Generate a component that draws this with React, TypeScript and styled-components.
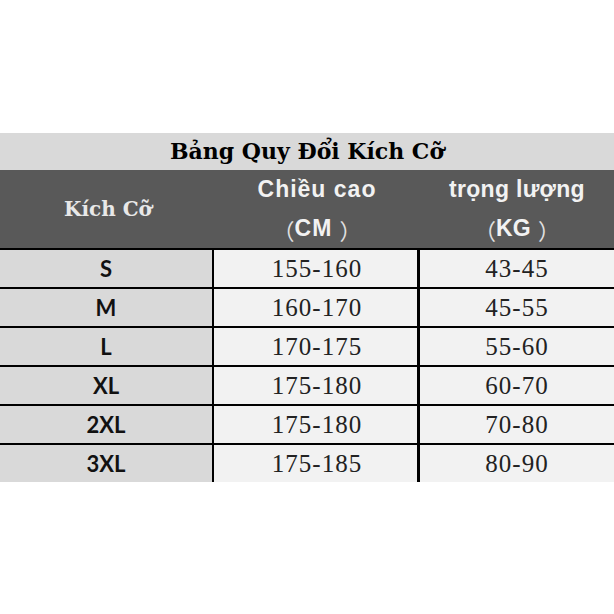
import React from "react";
import styled, { createGlobalStyle } from "styled-components";

const GlobalStyle = createGlobalStyle`
  html, body {
    margin: 0;
    padding: 0;
    background: #ffffff;
  }
`;

type SizeRow = { size: string; height: string; weight: string };

const rows: SizeRow[] = [
  { size: "S", height: "155-160", weight: "43-45" },
  { size: "M", height: "160-170", weight: "45-55" },
  { size: "L", height: "170-175", weight: "55-60" },
  { size: "XL", height: "175-180", weight: "60-70" },
  { size: "2XL", height: "175-180", weight: "70-80" },
  { size: "3XL", height: "175-185", weight: "80-90" },
];

const Page = styled.div`
  width: 614px;
  height: 614px;
  padding-top: 133px;
  box-sizing: border-box;
`;

const Title = styled.div`
  height: 37px;
  background: #d9d9d9;
  display: flex;
  align-items: center;
  justify-content: center;
  font-family: "DejaVu Serif", "Liberation Serif", serif;
  font-weight: bold;
  font-size: 22px;
  color: #000;
  padding-bottom: 2px;
  box-sizing: border-box;
`;

const Grid = styled.div`
  display: grid;
  grid-template-columns: 214px 206px 1fr;
`;

const Header = styled(Grid)`
  height: 78px;
  background: #595959;
`;

const SizeHead = styled.div`
  display: flex;
  align-items: center;
  justify-content: center;
  font-family: "DejaVu Serif", "Liberation Serif", serif;
  font-weight: bold;
  font-size: 20px;
  color: #e8e8e8;
  padding-left: 2px;
`;

const HeadCol = styled.div<{ $spacing: number }>`
  display: grid;
  grid-template-rows: 39px 39px;
  font-family: "Liberation Sans", Arial, "Noto Sans CJK SC", sans-serif;
  font-weight: bold;
  font-size: 23px;
  letter-spacing: ${(p) => p.$spacing}px;
  color: #f2f2f2;
`;

const HeadLine = styled.div`
  display: flex;
  align-items: center;
  justify-content: center;
`;

const Paren = styled.span<{ $close?: boolean }>`
  font-family: "Noto Sans CJK SC", sans-serif;
  font-weight: normal;
  font-size: 22px;
  letter-spacing: 0;
  color: #e0e0e0;
  margin-left: ${(p) => (p.$close ? "7px" : "0")};
`;

const Row = styled(Grid)`
  height: 39px;
  border-top: 2px solid #000;
  box-sizing: border-box;
`;

const Cell = styled.div<{ $shade?: boolean; $edge?: number }>`
  display: flex;
  align-items: center;
  justify-content: center;
  background: ${(p) => (p.$shade ? "#d9d9d9" : "#f2f2f2")};
  border-right: ${(p) => (p.$edge ? `${p.$edge}px solid #000` : "none")};
  padding-left: ${(p) => (p.$edge === 3 ? "3px" : "0")};
  box-sizing: border-box;
`;

const SizeText = styled.span`
  font-family: Lato, "Open Sans", sans-serif;
  font-weight: bold;
  font-size: 22px;
  color: #111;
`;

const ValueText = styled.span`
  font-family: "Liberation Serif", "Times New Roman", serif;
  font-size: 25px;
  letter-spacing: 1px;
  color: #222;
`;

export default function App() {
  return (
    <>
      <GlobalStyle />
      <Page>
        <Title>Bảng Quy Đổi Kích Cỡ</Title>
        <Header>
          <SizeHead>Kích Cỡ</SizeHead>
          <HeadCol $spacing={1}>
            <HeadLine>Chiều cao</HeadLine>
            <HeadLine>
              <Paren>（</Paren>CM<Paren $close>）</Paren>
            </HeadLine>
          </HeadCol>
          <HeadCol $spacing={0.3}>
            <HeadLine>trọng lượng</HeadLine>
            <HeadLine>
              <Paren>（</Paren>KG<Paren $close>）</Paren>
            </HeadLine>
          </HeadCol>
        </Header>
        {rows.map((r) => (
          <Row key={r.size}>
            <Cell $shade $edge={2}>
              <SizeText>{r.size}</SizeText>
            </Cell>
            <Cell $edge={3}>
              <ValueText>{r.height}</ValueText>
            </Cell>
            <Cell>
              <ValueText>{r.weight}</ValueText>
            </Cell>
          </Row>
        ))}
      </Page>
    </>
  );
}
